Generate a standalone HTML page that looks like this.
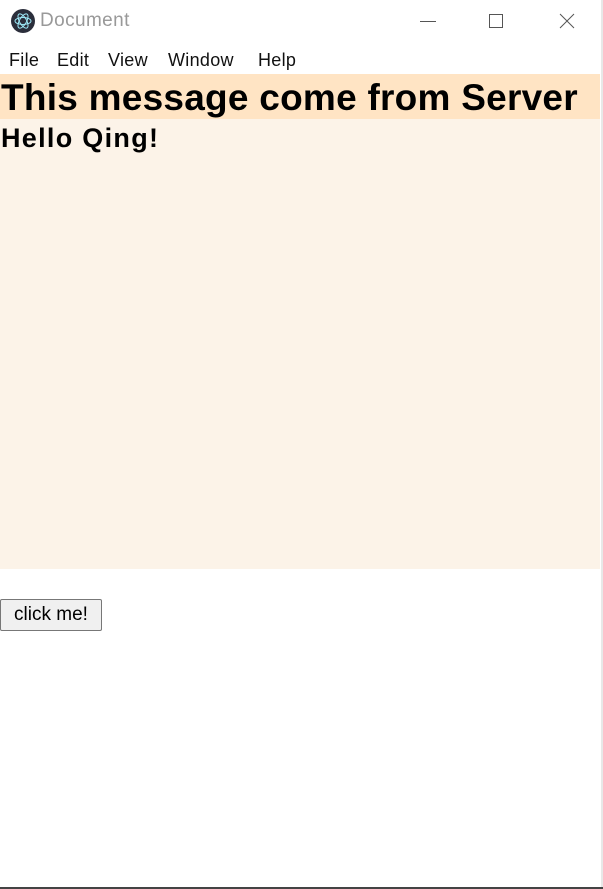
<!DOCTYPE html>
<html><head><style>
body{margin:0;width:603px;height:889px;background:#fff;font-family:"Liberation Sans",sans-serif;position:relative;overflow:hidden}
.t{position:absolute;left:40px;top:10px;font-size:19px;color:#999;letter-spacing:0.4px}
.m{position:absolute;top:50px;font-size:18px;color:#111;letter-spacing:0.3px}
.h1{position:absolute;left:0;top:74px;width:600px;height:45px;background:#ffe4c4}
.h1 span{position:absolute;left:1px;top:3px;font-size:37px;font-weight:bold;letter-spacing:0.25px;white-space:nowrap}
.bg{position:absolute;left:0;top:119px;width:600px;height:450px;background:#fcf3e8}
.bg span{position:absolute;left:1px;top:4px;font-size:27px;font-weight:bold;letter-spacing:1.3px}
button{position:absolute;left:0;top:599px;width:102px;height:32px;font-size:19px;font-family:"Liberation Sans",sans-serif;background:#f0f0f0;border:1px solid #777;border-radius:2px;padding:0}
</style></head><body>
<div style="position:absolute;left:11px;top:9px;width:24px;height:24px;border-radius:50%;background:#2b2e3b"></div>
<svg style="position:absolute;left:11px;top:9px" width="24" height="24"><g fill="none" stroke="#9feaf9" stroke-width="1"><ellipse cx="12" cy="12" rx="8" ry="3.5" transform="rotate(60 12 12)"/><ellipse cx="12" cy="12" rx="8" ry="3.5" transform="rotate(-60 12 12)"/><ellipse cx="12" cy="12" rx="8" ry="3.5"/></g></svg>
<div class="t">Document</div>
<div style="position:absolute;left:420px;top:21px;width:16px;height:1px;background:#555"></div>
<div style="position:absolute;left:489px;top:14px;width:12px;height:12px;border:1px solid #555"></div>
<svg style="position:absolute;left:559px;top:13px" width="16" height="16"><path d="M1 1L15 15M15 1L1 15" stroke="#555" stroke-width="1"/></svg>
<div class="m" style="left:9px">File</div>
<div class="m" style="left:57px">Edit</div>
<div class="m" style="left:108px">View</div>
<div class="m" style="left:168px">Window</div>
<div class="m" style="left:258px">Help</div>
<div class="h1"><span>This message come from Server</span></div>
<div class="bg"><span>Hello Qing!</span></div>
<button>click me!</button>
<div style="position:absolute;left:601px;top:0;width:2px;height:889px;background:#e8e8e8"></div>
<div style="position:absolute;left:0;top:887px;width:603px;height:2px;background:#444"></div>
</body></html>
